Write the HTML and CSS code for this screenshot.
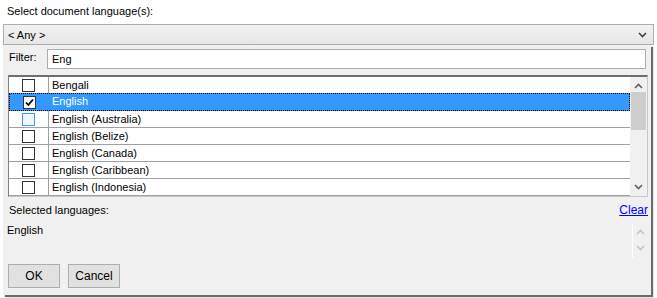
FILE: index.html
```html
<!DOCTYPE html>
<html lang="en">
<head>
  <meta charset="UTF-8">
  <title>Select document language</title>
  <link rel="stylesheet" href="styles.css">
</head>
<body>
  <div class="title">Select document language(s):</div>

  <div class="combo">
    <span>&lt; Any &gt;</span>
    <svg class="combo-arrow" width="9" height="6" viewBox="0 0 9 6"><path d="M1 1 L4.5 4.5 L8 1" fill="none" stroke="#444" stroke-width="1.6"/></svg>
  </div>

  <div class="panel">
    <div class="filter-row">
      <label>Filter:</label>
      <input type="text" class="filter-input" value="Eng">
    </div>

    <div class="list">
      <div class="rows">
        <div class="row"><div class="check-cell"><span class="box"></span></div><div class="name">Bengali</div></div>
        <div class="row selected"><div class="check-cell"><span class="box checked"><svg width="11" height="11" viewBox="0 0 11 11"><path d="M2 5.5 L4.3 8 L9 2.5" fill="none" stroke="#000" stroke-width="1.8"/></svg></span></div><div class="name">English</div></div>
        <div class="row"><div class="check-cell"><span class="box hover"></span></div><div class="name">English (Australia)</div></div>
        <div class="row"><div class="check-cell"><span class="box"></span></div><div class="name">English (Belize)</div></div>
        <div class="row"><div class="check-cell"><span class="box"></span></div><div class="name">English (Canada)</div></div>
        <div class="row"><div class="check-cell"><span class="box"></span></div><div class="name">English (Caribbean)</div></div>
        <div class="row"><div class="check-cell"><span class="box"></span></div><div class="name">English (Indonesia)</div></div>
        <div class="row"><div class="check-cell"><span class="box"></span></div><div class="name"></div></div>
      </div>
      <div class="scrollbar">
        <svg width="9" height="6" viewBox="0 0 9 6"><path d="M1 5 L4.5 1.5 L8 5" fill="none" stroke="#606060" stroke-width="1.6"/></svg>
        <div class="track"><div class="thumb"></div></div>
        <svg width="9" height="6" viewBox="0 0 9 6"><path d="M1 1 L4.5 4.5 L8 1" fill="none" stroke="#606060" stroke-width="1.6"/></svg>
      </div>
    </div>

    <div class="selected-head">
      <span>Selected languages:</span>
      <a href="#" class="clear">Clear</a>
    </div>

    <div class="selected-box">
      <div class="selected-text">English</div>
      <div class="mini-scroll">
        <svg width="9" height="6" viewBox="0 0 9 6"><path d="M1 5 L4.5 1.5 L8 5" fill="none" stroke="#c4c4c4" stroke-width="1.6"/></svg>
        <svg width="9" height="6" viewBox="0 0 9 6"><path d="M1 1 L4.5 4.5 L8 1" fill="none" stroke="#c4c4c4" stroke-width="1.6"/></svg>
      </div>
    </div>

    <div class="buttons">
      <button class="btn">OK</button>
      <button class="btn">Cancel</button>
    </div>
  </div>
</body>
</html>
```

FILE: styles.css
```css
:root {
  --panel-bg: #f0f0f0;
  --border: #adadad;
  --line: #a0a0a0;
  --select: #3399ff;
}

body {
  margin: 0;
  background: #fff;
  font-family: "Liberation Sans", Arial, sans-serif;
  font-size: 11px;
  color: #000;
  width: 657px;
  height: 298px;
  overflow: hidden;
}

.title {
  height: 24px;
  line-height: 23px;
  padding-left: 7px;
}

.combo {
  margin-left: 3px;
  height: 19px;
  border: 1px solid var(--border);
  background: linear-gradient(#f2f2f2, #e6e6e6);
  display: flex;
  align-items: center;
  justify-content: space-between;
  padding: 0 6px 0 4px;
  box-sizing: content-box;
  width: 639px;
}

.panel {
  margin-left: 3px;
  width: 648px;
  height: 250px;
  background: var(--panel-bg);
  box-shadow: 2px 2px 1px #6a6a6a;
  padding: 4px 3px 0 5px;
  box-sizing: border-box;
  display: flex;
  flex-direction: column;
}

.filter-row {
  display: flex;
  align-items: center;
  height: 20px;
}

.filter-row label {
  width: 38px;
  padding-left: 1px;
  line-height: 12px;
  margin-top: -4px;
}

.filter-input {
  flex: 1;
  height: 20px;
  margin: 0 2px 0 0;
  border: 1px solid var(--border);
  background: #fff;
  font: inherit;
  padding: 0 4px;
  box-sizing: border-box;
  outline: none;
}

.list {
  margin-top: 6px;
  height: 122px;
  border: 1px solid #c8c8c8;
  border-top: 2px solid #6e6e6e;
  border-left: 1px solid #828282;
  background: #fff;
  display: flex;
  box-sizing: border-box;
  overflow: hidden;
}

.rows {
  flex: 1;
  overflow: hidden;
}

.row {
  display: flex;
  height: 17px;
  border-bottom: 1px solid var(--line);
  box-sizing: border-box;
}

.row .check-cell {
  width: 39px;
  border-right: 1px solid var(--line);
  display: flex;
  align-items: center;
  justify-content: center;
}

.row .name {
  padding-left: 3px;
  line-height: 16px;
}

.row.selected {
  background: var(--select);
  color: #fff;
  border: 1px dotted #000;
  height: 18px;
  margin-top: -1px;
}

.row.selected .check-cell {
  border-right-color: var(--select);
  width: 38px;
}

.row.selected .name {
  line-height: 15px;
}

.box {
  width: 11px;
  height: 11px;
  border: 1px solid #333;
  background: #fff;
  display: flex;
  align-items: center;
  justify-content: center;
}

.box.hover {
  border-color: #3c9af8;
  background: #eef6ff;
}

.scrollbar {
  width: 17px;
  background: var(--panel-bg);
  display: flex;
  flex-direction: column;
  align-items: center;
  padding-top: 6px;
  box-sizing: border-box;
}

.scrollbar .track {
  flex: 1;
  width: 100%;
  padding: 3px 1px 0;
  box-sizing: border-box;
}

.scrollbar .thumb {
  height: 38px;
  background: #cdcdcd;
}

.scrollbar svg:last-child {
  margin-bottom: 6px;
}

.selected-head {
  display: flex;
  justify-content: space-between;
  height: 16px;
  line-height: 16px;
  margin-top: 5px;
  padding-left: 1px;
}

.clear {
  color: #0000ff;
  text-decoration: underline;
  font-size: 12px;
}

.selected-box {
  display: flex;
  justify-content: space-between;
  height: 36px;
  margin-top: 4px;
  margin-left: -1px;
}

.selected-text {
  line-height: 16px;
}

.mini-scroll {
  width: 15px;
  border-left: 1px solid #fff;
  display: flex;
  flex-direction: column;
  align-items: center;
  justify-content: space-between;
  padding: 6px 0 7px;
  box-sizing: border-box;
  margin-top: 1px;
  margin-right: 1px;
}

.buttons {
  display: flex;
  gap: 8px;
  margin-top: 6px;
}

.btn {
  width: 52px;
  height: 24px;
  background: #e1e1e1;
  border: 1px solid var(--border);
  font: inherit;
  font-size: 12px;
  color: #000;
  padding: 0;
}
```
